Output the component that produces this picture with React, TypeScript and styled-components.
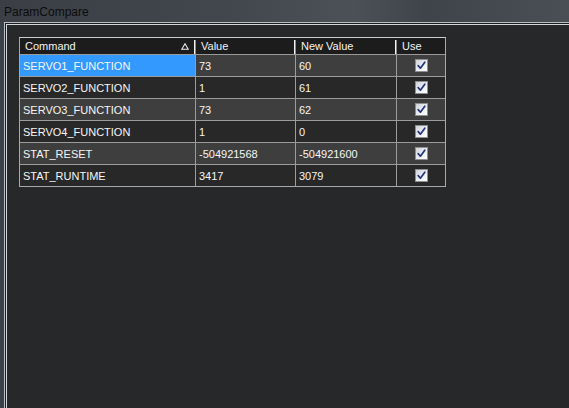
import React from "react";
import styled, { createGlobalStyle } from "styled-components";

const Global = createGlobalStyle`
  html, body { margin: 0; padding: 0; background: #262829; }
  body { font-family: "Liberation Sans", Arial, sans-serif; }
`;

const Window = styled.div`
  width: 569px;
  height: 408px;
  display: flex;
  flex-direction: column;
  overflow: hidden;
`;

const TitleBar = styled.div`
  height: 22px;
  box-sizing: border-box;
  flex: none;
  display: flex;
  align-items: center;
  padding: 2px 0 0 4px;
  background: linear-gradient(
    90deg,
    #3b3f45 0%,
    #42464d 40%,
    #4c5057 62%,
    #3f434a 75%,
    #4a4e55 100%
  );
  color: #0c0c0c;
  font-size: 12px;
`;

const Frame = styled.div`
  flex: 1;
  display: flex;
  padding-left: 4px;
  background: #3b4149;
`;

const Client = styled.div`
  flex: 1;
  background: #262829;
  box-shadow: inset 1px 1px 0 #b9bec4, inset 2px 2px 0 #1b1d1f,
    inset 3px 3px 0 #d3d7db;
  padding: 14px 0 0 15px;
`;

const COLS = "175px 99px 100px 48px";

const Table = styled.div`
  display: inline-flex;
  flex-direction: column;
  border: 1px solid #a9a9a9;
  border-top-color: #cfcfcf;
`;

const HeaderRow = styled.div`
  display: grid;
  grid-template-columns: ${COLS};
  column-gap: 1px;
  height: 16px;
  background: #1c1c1c;
  border-bottom: 1px solid #9a9a9a;
`;

const HeaderCell = styled.div<{ $sep?: boolean }>`
  position: relative;
  display: flex;
  align-items: center;
  justify-content: space-between;
  padding: 1px 6px 0 5px;
  color: #f4f4f4;
  font-size: 11px;
  &::before {
    content: "";
    display: ${(p) => (p.$sep ? "block" : "none")};
    position: absolute;
    left: -2px;
    top: 2px;
    bottom: 0;
    width: 2px;
    background: linear-gradient(90deg, #f2f2f2 50%, #8a8a8a 50%);
  }
`;

const Body = styled.div`
  display: grid;
  grid-template-columns: ${COLS};
  grid-auto-rows: 21px;
  gap: 1px;
  background: #9c9c9c;
`;

const Cell = styled.div<{ $alt: boolean; $selected?: boolean; $center?: boolean }>`
  display: flex;
  align-items: center;
  justify-content: ${(p) => (p.$center ? "center" : "flex-start")};
  padding-left: ${(p) => (p.$center ? "0" : "3px")};
  padding-top: ${(p) => (p.$center ? "0" : "1px")};
  background: ${(p) => (p.$selected ? "#3399ff" : p.$alt ? "#3e3e3e" : "#282828")};
  color: #f6f6f6;
  font-size: 11px;
  white-space: nowrap;
`;

const Check = styled.span`
  width: 11px;
  height: 11px;
  border: 1px solid #8e8f8f;
  background: linear-gradient(135deg, #cfd3da 0%, #eef0f3 60%, #ffffff 100%);
  display: flex;
  align-items: center;
  justify-content: center;
  margin-left: 1px;
`;

const SortGlyph = () => (
  <svg width="8" height="7" viewBox="0 0 8 7">
    <path d="M4 0.8 L7.3 6.3 L0.7 6.3 Z" fill="none" stroke="#f0f0f0" strokeWidth="1.1" />
  </svg>
);

const CheckMark = () => (
  <svg width="9" height="9" viewBox="0 0 9 9">
    <path
      d="M1.2 4.6 L3.4 7.2 L7.8 1.2"
      fill="none"
      stroke="#24357e"
      strokeWidth="1.7"
      strokeLinecap="round"
      strokeLinejoin="round"
    />
  </svg>
);

const rows = [
  ["SERVO1_FUNCTION", "73", "60"],
  ["SERVO2_FUNCTION", "1", "61"],
  ["SERVO3_FUNCTION", "73", "62"],
  ["SERVO4_FUNCTION", "1", "0"],
  ["STAT_RESET", "-504921568", "-504921600"],
  ["STAT_RUNTIME", "3417", "3079"],
];

export default function App() {
  return (
    <Window>
      <Global />
      <TitleBar>ParamCompare</TitleBar>
      <Frame>
        <Client>
          <Table>
            <HeaderRow>
              <HeaderCell>
                <span>Command</span>
                <SortGlyph />
              </HeaderCell>
              <HeaderCell $sep>Value</HeaderCell>
              <HeaderCell $sep>New Value</HeaderCell>
              <HeaderCell $sep>Use</HeaderCell>
            </HeaderRow>
            <Body>
              {rows.map((r, i) => {
                const alt = i % 2 === 0;
                return (
                  <React.Fragment key={r[0]}>
                    <Cell $alt={alt} $selected={i === 0}>{r[0]}</Cell>
                    <Cell $alt={alt}>{r[1]}</Cell>
                    <Cell $alt={alt}>{r[2]}</Cell>
                    <Cell $alt={alt} $center>
                      <Check>
                        <CheckMark />
                      </Check>
                    </Cell>
                  </React.Fragment>
                );
              })}
            </Body>
          </Table>
        </Client>
      </Frame>
    </Window>
  );
}
